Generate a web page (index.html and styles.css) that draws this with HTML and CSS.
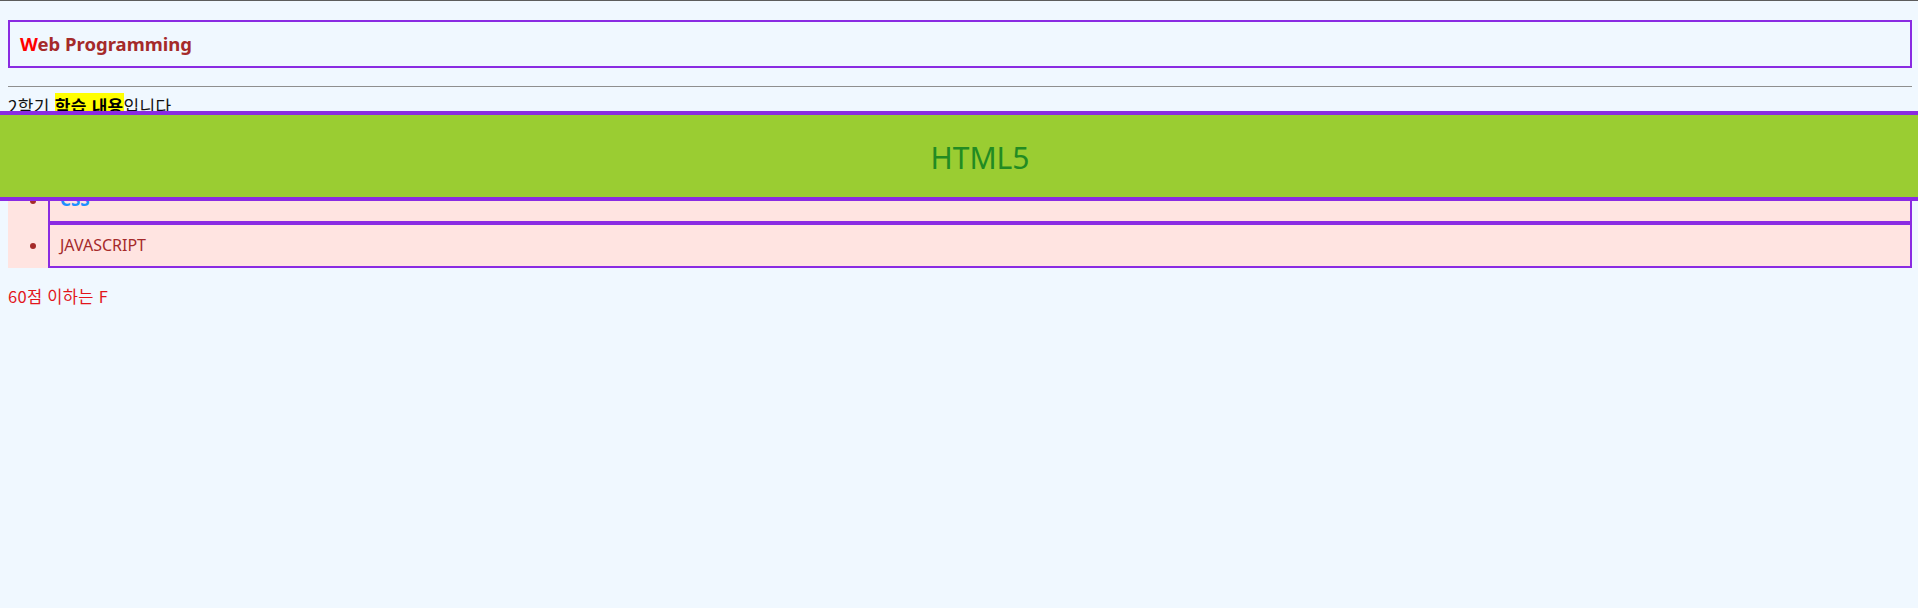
FILE: index.html
```html
<!DOCTYPE html>
<html lang="ko">
<head>
<meta charset="utf-8">
<title>Web Programming</title>
<link rel="stylesheet" href="styles.css">
</head>
<body class="body">
<div class="page">
  <h1 class="title"><span class="initial">W</span>eb Programming</h1>
  <hr class="rule">
  <p class="intro">2학기 <mark class="mark">학습 내용</mark>입니다</p>
  <ul class="topics">
    <li class="topic topic-hidden">HTML5</li>
    <li class="topic"><span class="css">CSS</span></li>
    <li class="topic">JAVASCRIPT</li>
  </ul>
  <p class="score">60점 이하는 F</p>
</div>
<div class="banner">HTML5</div>
</body>
</html>
```

FILE: styles.css
```css
.body {
  margin: 0;
  background: #f0f8ff;
  font-family: "Noto Sans", "Noto Sans CJK KR", sans-serif;
  font-size: 16px;
  color: #111;
}

.page {
  border-top: 1px solid #5c5c5c;
  padding: 0 6px 0 8px;
}

.title {
  margin: 19px 0 0;
  border: 2px solid #8a2be2;
  padding: 10px 10px;
  font-size: 18.5px;
  line-height: 24px;
  font-weight: 700;
  color: #a52a2a;
}

.initial {
  color: #ff0000;
}

.rule {
  margin: 18px 0 8px;
  border: 0;
  border-top: 1px solid #8f8f8f;
  height: 0;
}

.intro {
  margin: 0 0 15px;
  line-height: 22px;
  font-size: 17px;
  letter-spacing: 0.3px;
  font-family: "Noto Sans CJK KR", sans-serif;
}

.mark {
  background: #ffff00;
  color: #000;
  font-weight: 700;
}

.topics {
  margin: 0;
  padding: 0 0 0 40px;
  background: #ffe4e1;
  color: #a52a2a;
  list-style: disc;
}

.topic {
  border: 2px solid #8a2be2;
  padding: 0 10px;
  line-height: 41px;
}

.topic-hidden {
  visibility: hidden;
}

.css {
  color: #1e90ff;
  font-weight: 700;
  font-size: 17px;
}

.score {
  margin: 16px 0;
  color: #e2161b;
  font-size: 16.5px;
  letter-spacing: 0.3px;
  font-family: "Noto Sans CJK KR", sans-serif;
}

.banner {
  position: absolute;
  top: 111px;
  left: 0;
  right: 0;
  height: 78px;
  padding: 4px 0 0 42px;
  border-top: 4px solid #8a2be2;
  border-bottom: 4px solid #8a2be2;
  background: #9acd32;
  color: #228b22;
  font-size: 30px;
  line-height: 78px;
  text-align: center;
}
```
